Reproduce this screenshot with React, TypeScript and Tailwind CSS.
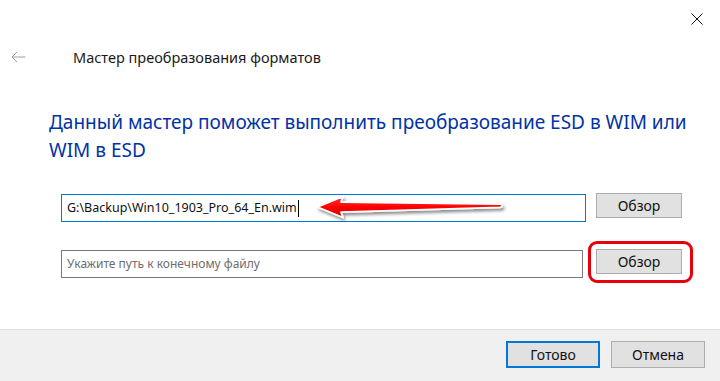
import React from "react";

const font = { fontFamily: '"Noto Sans", "Open Sans", sans-serif' };

function Arrow() {
  return (
    <svg
      className="absolute left-[310px] top-[190px]"
      width="205"
      height="36"
      viewBox="310 190 205 36"
    >
      <defs>
        <linearGradient id="rg" x1="0" y1="0" x2="0" y2="1">
          <stop offset="0" stopColor="#ff3a3a" />
          <stop offset="0.5" stopColor="#ff0000" />
          <stop offset="1" stopColor="#d40000" />
        </linearGradient>
        <filter id="sh" x="-10%" y="-40%" width="130%" height="200%">
          <feDropShadow dx="1.5" dy="2.5" stdDeviation="1.6" floodColor="#000" floodOpacity="0.45" />
        </filter>
      </defs>
      <path
        d="M317.5,207 L343,196.5 L341,202 L500,204 Q504.8,205.6 500,207.4 L341,212.2 L343,217.5 Z"
        fill="url(#rg)"
        stroke="#fff"
        strokeWidth="1.8"
        strokeLinejoin="round"
        filter="url(#sh)"
      />
    </svg>
  );
}

export default function App() {
  return (
    <div
      className="relative w-[720px] h-[381px] bg-white flex flex-col overflow-hidden"
      style={font}
    >
      {/* Title bar */}
      <div className="h-[38px] flex justify-end items-center pr-[17px]">
        <svg width="12" height="12" viewBox="0 0 12 12">
          <path d="M0.5 0.5 L11.5 11.5 M11.5 0.5 L0.5 11.5" stroke="#111" strokeWidth="1" />
        </svg>
      </div>

      {/* Back + title */}
      <div className="h-[20px] mt-[9px] flex items-center">
        <svg className="ml-[11px]" width="15" height="12" viewBox="0 0 15 12">
          <path d="M14.5 6 H1 M6 1 L1 6 L6 11" stroke="#a0a0a0" strokeWidth="1" fill="none" />
        </svg>
        <span className="ml-[47px] text-[14.5px] leading-[20px] text-[#1a1a1a]">
          Мастер преобразования форматов
        </span>
      </div>

      {/* Main instruction */}
      <div className="mt-[41px] pl-[49px] text-[19px] leading-[28px] text-[#0033a6] whitespace-nowrap">
        <div>Данный мастер поможет выполнить преобразование ESD в WIM или</div>
        <div>WIM в ESD</div>
      </div>

      {/* Source row */}
      <div className="mt-[29px] pl-[61px] flex items-start">
        <div className="mt-[1px] w-[525px] h-[28px] border border-[#0078d7] flex items-center pl-[5px] text-[12.5px] text-[#111]">
          <span>G:\Backup\Win10_1903_Pro_64_En.wim</span>
          <span className="ml-[1px] w-[1px] h-[17px] bg-black" />
        </div>
        <button className="ml-[10px] w-[86px] h-[25px] bg-[#e1e1e1] border border-[#adadad] text-[14px] text-[#111] leading-none">
          Обзор
        </button>
      </div>

      {/* Destination row */}
      <div className="mt-[27px] pl-[61px] flex items-start">
        <div className="mt-[1px] w-[522px] h-[28px] border border-[#7a7a7a] flex items-center pl-[5px] text-[12px] text-[#6d6d6d]">
          Укажите путь к конечному файлу
        </div>
        <button className="ml-[13px] w-[86px] h-[25px] bg-[#e1e1e1] border border-[#adadad] text-[14px] text-[#111] leading-none">
          Обзор
        </button>
      </div>

      <div className="flex-1" />

      {/* Footer */}
      <div className="h-[52px] bg-[#f0f0f0] border-t border-[#dfdfdf] flex justify-end items-start pt-[11px] pr-[15px] gap-[11px]">
        <button className="w-[94px] h-[27px] bg-[#e1e1e1] border-2 border-[#0078d7] text-[14px] text-[#111] leading-none">
          Готово
        </button>
        <button className="w-[94px] h-[27px] bg-[#e1e1e1] border border-[#adadad] text-[14px] text-[#111] leading-none">
          Отмена
        </button>
      </div>

      {/* Annotations */}
      <Arrow />
      <div className="absolute left-[588px] top-[241px] w-[105px] h-[42px] rounded-[9px] border-[3px] border-[#e8000b]" />
    </div>
  );
}
